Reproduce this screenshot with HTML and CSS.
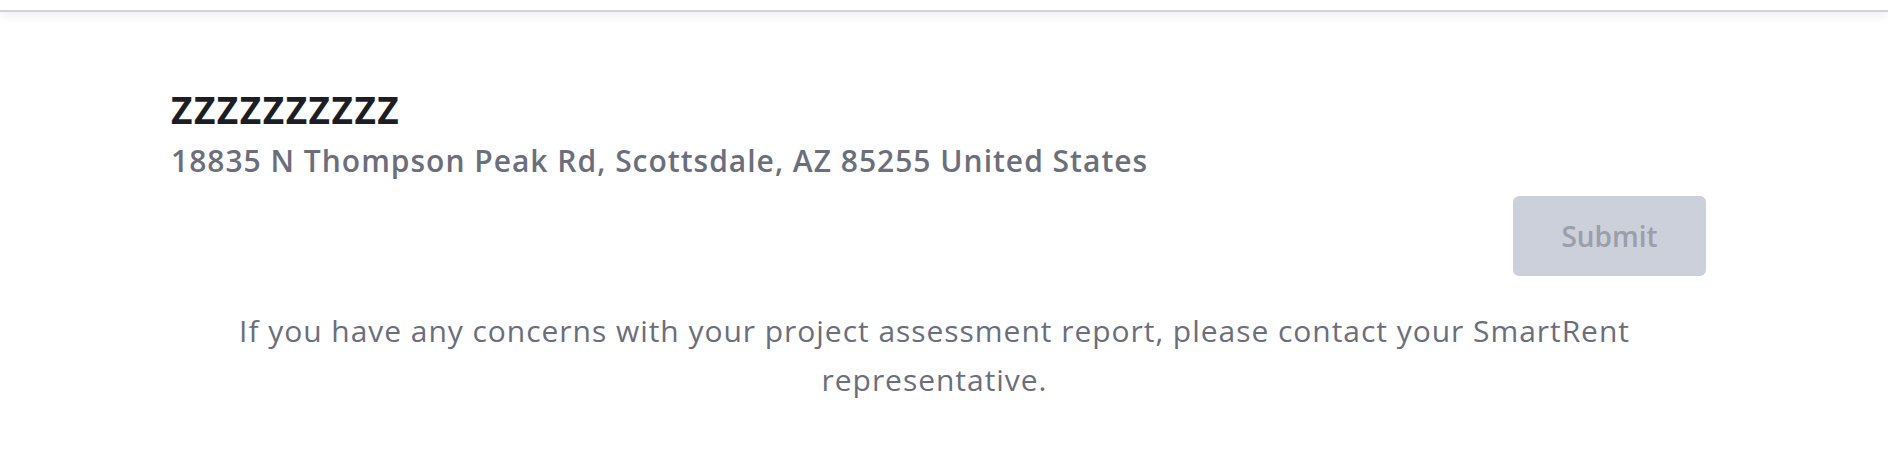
FILE: index.html
```html
<!DOCTYPE html>
<html lang="en">
<head>
<meta charset="utf-8">
<title>Project assessment</title>
<link rel="stylesheet" href="styles.css">
</head>
<body>
<header class="topbar"></header>
<main class="content">
  <section class="property">
    <h1 class="property-name">ZZZZZZZZZZ</h1>
    <p class="property-address">18835 N Thompson Peak Rd, Scottsdale, AZ 85255 United States</p>
  </section>
  <div class="actions">
    <button class="btn-submit" type="button" disabled>Submit</button>
  </div>
  <p class="notice">If you have any concerns with your project assessment report, please contact your SmartRent representative.</p>
</main>
</body>
</html>
```

FILE: styles.css
```css
html, body {
  margin: 0;
  padding: 0;
  background: #ffffff;
}

body {
  font-family: "Open Sans", "Noto Sans", sans-serif;
  width: 1888px;
  height: 462px;
  overflow: hidden;
}

.topbar {
  height: 10px;
  border-bottom: 2px solid #cfd1db;
  box-shadow: 0 4px 10px rgba(30, 35, 60, 0.07);
  position: relative;
}

.content {
  margin-left: 171px;
  width: 1535px;
  display: flex;
  flex-direction: column;
}

.property {
  padding-top: 77px;
}

.property-name {
  margin: 0;
  font-size: 37px;
  line-height: 42px;
  font-weight: 700;
  color: #1c1e24;
  letter-spacing: 1.5px;
}

.property-address {
  margin: 10px 0 0;
  font-size: 30px;
  line-height: 39px;
  font-weight: 600;
  color: #6b6e7b;
  letter-spacing: 1px;
}

.actions {
  display: flex;
  justify-content: flex-end;
  margin-top: 16px;
}

.btn-submit {
  width: 193px;
  height: 80px;
  border: none;
  border-radius: 6px;
  background: #cbd0da;
  color: #9b9eab;
  font-family: "Open Sans", "Noto Sans", sans-serif;
  font-size: 28px;
  font-weight: 600;
  padding: 0;
}

.notice {
  margin: 30px 0 0;
  padding: 0 16px 0 8px;
  text-align: center;
  font-size: 30px;
  line-height: 49px;
  font-weight: 400;
  color: #6b6e7b;
  letter-spacing: 0.96px;
}
```
